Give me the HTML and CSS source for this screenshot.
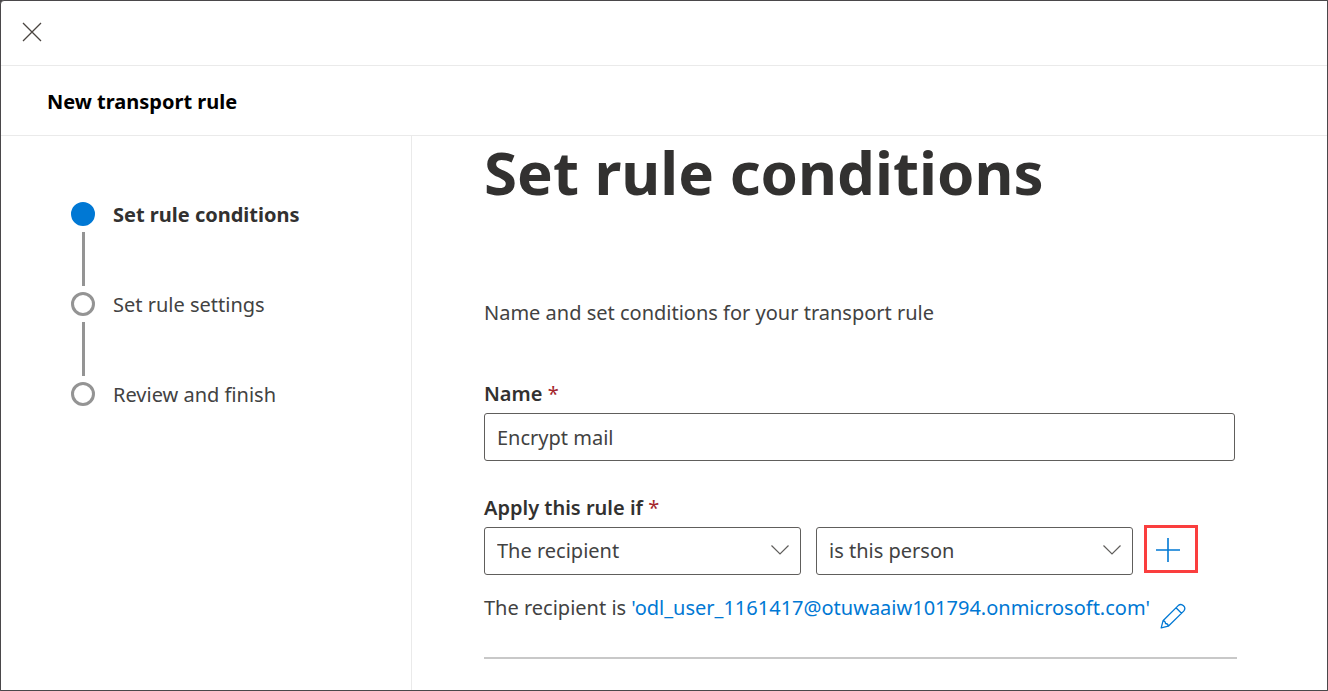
FILE: index.html
```html
<!DOCTYPE html>
<html lang="en">
<head>
<meta charset="utf-8">
<title>New transport rule</title>
<link rel="stylesheet" href="styles.css">
</head>
<body>
<div class="panel">
  <div class="topbar">
    <button class="icon-button close" type="button" aria-label="Close">
      <svg width="20" height="20" viewBox="0 0 20 20" fill="none" stroke="#4a4440" stroke-width="1.3"><path d="M1 1l18 18M19 1L1 19"/></svg>
    </button>
  </div>
  <header class="titlebar"><h2 class="title">New transport rule</h2></header>
  <div class="body">
    <nav class="sidebar" aria-label="Steps">
      <ol class="steps">
        <li class="step step-current" aria-current="step"><span class="dot"></span><span class="step-label">Set rule conditions</span></li>
        <li class="step"><span class="dot"></span><span class="step-label">Set rule settings</span></li>
        <li class="step"><span class="dot"></span><span class="step-label">Review and finish</span></li>
      </ol>
    </nav>
    <main class="content">
      <h1 class="heading">Set rule conditions</h1>
      <p class="intro">Name and set conditions for your transport rule</p>
      <form class="form">
        <div class="field field-name">
          <label class="label" for="name">Name <span class="required">*</span></label>
          <input class="control" id="name" type="text" value="Encrypt mail">
        </div>
        <div class="field">
          <label class="label" for="condition">Apply this rule if <span class="required">*</span></label>
          <div class="condition">
            <div class="dropdown">
              <select class="control" id="condition"><option>The recipient</option></select>
              <svg class="chevron" width="18" height="10" viewBox="0 0 18 10" fill="none" stroke="#605e5c" stroke-width="1.2"><path d="M.5 .5L9 9l8.500-8.500"/></svg>
            </div>
            <div class="dropdown">
              <select class="control" aria-label="Match type"><option>is this person</option></select>
              <svg class="chevron" width="18" height="10" viewBox="0 0 18 10" fill="none" stroke="#605e5c" stroke-width="1.2"><path d="M.5 .5L9 9l8.500-8.500"/></svg>
            </div>
            <button class="icon-button add" type="button" aria-label="Add condition">
              <svg width="24" height="24" viewBox="0 0 24 24" fill="none" stroke="#0078d4" stroke-width="1.6"><path d="M12 0v24M0 12h24"/></svg>
            </button>
          </div>
        </div>
        <div class="summary">
          <p class="summary-text">The recipient is <a class="link" href="#">'odl_user_1161417@otuwaaiw101794.onmicrosoft.com'</a></p>
          <button class="icon-button edit" type="button" aria-label="Edit recipient">
            <svg width="26" height="26" viewBox="0 0 26 26" fill="none" stroke="#0078d4" stroke-width="1.3" stroke-linejoin="round"><path d="M1.200 24.800L3 17.800L18.200 2.600a3.900 3.900 0 0 1 5.500 5.500L8.300 23.200zM3 17.800q2.500.2 2.500 2.700q2.700.1 2.800 2.700M16 4.800l5.500 5.500"/></svg>
          </button>
        </div>
      </form>
    </main>
  </div>
</div>
</body>
</html>
```
FILE: styles.css
```css
* { box-sizing: border-box; }
body {
  margin: 0;
  font: 20px/28px "Noto Sans", "Open Sans", sans-serif;
  color: #424242;
  background: #4a484a;
}
h1, h2, p, ol { margin: 0; padding: 0; }
.panel {
  display: flex;
  flex-direction: column;
  min-height: 100vh;
  border: 1px solid #4a484a;
  border-radius: 4px 0 0 0;
  background: #fff;
}
.topbar {
  display: flex;
  align-items: center;
  height: 65px;
  padding: 0 20px 2px;
  border-bottom: 1px solid #eaeaea;
}
.icon-button {
  display: flex;
  align-items: center;
  justify-content: center;
  padding: 0;
  border: 0;
  background: none;
  cursor: pointer;
}
.close { width: 22px; height: 22px; }
.titlebar {
  display: flex;
  align-items: center;
  height: 70px;
  padding: 2px 46px 0;
  border-bottom: 1px solid #eaeaea;
}
.title { font-size: 20px; line-height: 28px; font-weight: 700; color: #000; }
.body { display: flex; flex: 1; }
.sidebar {
  flex: 0 0 411px;
  padding: 64px 70px;
  border-right: 1px solid #eaeaea;
}
.steps { list-style: none; }
.step {
  position: relative;
  display: flex;
  align-items: center;
  gap: 18px;
  height: 28px;
  margin-bottom: 62px;
}
.step:not(:last-child)::after {
  content: "";
  position: absolute;
  left: 11px;
  top: 32px;
  width: 3px;
  height: 54px;
  background: #949494;
}
.dot {
  flex: none;
  width: 24px;
  height: 24px;
  border: 3px solid #949494;
  border-radius: 50%;
}
.step-label { padding-top: 2px; }
.step-current .dot { border-color: #0078d4; background: #0078d4; }
.step-current .step-label { font-weight: 700; color: #323130; }
.content { flex: 1; padding: 0 90px 30px 72px; }
.heading {
  font-size: 60px;
  line-height: 72px;
  font-weight: 700;
  color: #323130;
}
.intro { margin-top: 91px; }
.form { display: flex; flex-direction: column; margin-top: 53px; }
.field { display: flex; flex-direction: column; gap: 5px; margin-bottom: 33px; }
.field-name { padding-right: 2px; }
.label { font-weight: 600; color: #323130; }
.required { font-weight: 400; color: #a4262c; }
.control {
  width: 100%;
  height: 48px;
  padding: 0 12px;
  border: 1px solid #605e5c;
  border-radius: 3px;
  font: inherit;
  color: #424242;
  background: #fff;
  appearance: none;
}
.condition { display: flex; gap: 15px; }
.dropdown { position: relative; flex: 1; }
.chevron { position: absolute; right: 12px; top: 18px; pointer-events: none; }
.add {
  width: 54px;
  height: 48px;
  margin: -2px 39px 0 -4px;
  padding: 2px 6px 0 0;
  border: 3px solid #fa3e3e;
}
.summary {
  display: flex;
  gap: 10px;
  height: 65px;
  margin-top: -14px;
  border-bottom: 2px solid #c8c8c8;
}
.link { color: #0078d4; text-decoration: none; }
.edit { width: 26px; height: 44px; }
```
